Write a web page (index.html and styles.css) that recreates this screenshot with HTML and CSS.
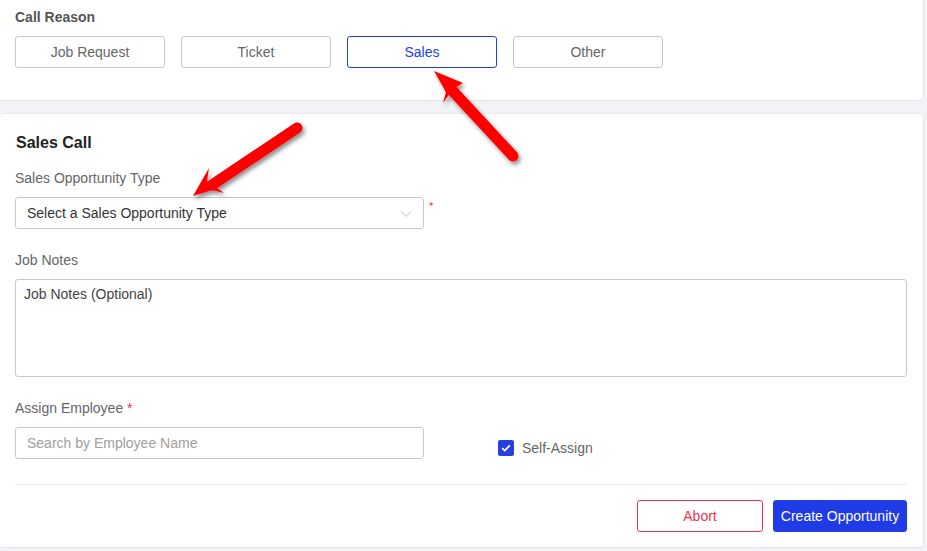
FILE: index.html
```html
<!DOCTYPE html>
<html>
<head>
<meta charset="utf-8">
<link rel="stylesheet" href="styles.css">
</head>
<body>
<div class="page">
  <section class="card card-top">
    <div class="section-label">Call Reason</div>
    <div class="reasons">
      <button class="reason">Job Request</button>
      <button class="reason">Ticket</button>
      <button class="reason active">Sales</button>
      <button class="reason">Other</button>
    </div>
  </section>
  <section class="card card-main">
    <h2 class="title">Sales Call</h2>
    <div class="field-label">Sales Opportunity Type</div>
    <div class="select-row">
      <div class="select">
        <span>Select a Sales Opportunity Type</span>
        <svg class="chev" width="12" height="8" viewBox="0 0 12 8"><path d="M1 1.5 L6 6.5 L11 1.5" fill="none" stroke="#bbb" stroke-width="1"/></svg>
      </div>
      <span class="req req-select">*</span>
    </div>
    <div class="field-label gap">Job Notes</div>
    <div class="textarea">Job Notes (Optional)</div>
    <div class="field-label gap">Assign Employee <span class="req">*</span></div>
    <div class="assign-row">
      <div class="input">Search by Employee Name</div>
      <label class="check">
        <span class="box"><svg width="10" height="8" viewBox="0 0 10 8"><path d="M1.2 4.2 L3.8 6.6 L8.8 1.4" fill="none" stroke="#fff" stroke-width="1.8"/></svg></span>
        <span>Self-Assign</span>
      </label>
    </div>
    <div class="divider"></div>
    <div class="actions">
      <button class="btn btn-abort">Abort</button>
      <button class="btn btn-primary">Create Opportunity</button>
    </div>
  </section>
  <svg class="arrows" width="927" height="551" viewBox="0 0 927 551">
    <defs>
      <filter id="sh" x="-20%" y="-20%" width="140%" height="140%">
        <feDropShadow dx="2" dy="3" stdDeviation="2.2" flood-color="#000" flood-opacity="0.45"/>
      </filter>
    </defs>
    <g filter="url(#sh)" fill="#ff0000" stroke="none">
      <line x1="513" y1="156" x2="450" y2="88" stroke="#ff0000" stroke-width="11" stroke-linecap="round"/>
      <polygon points="434,71 463,83 453,89 443,103 446,92"/>
      <line x1="297" y1="128" x2="212" y2="185" stroke="#ff0000" stroke-width="11" stroke-linecap="round"/>
      <polygon points="193,196 209,168 207,181 224,193 212,190"/>
    </g>
  </svg>
</div>
</body>
</html>
```
FILE: styles.css
```css
html, body {
  margin: 0;
  padding: 0;
}
body {
  background: #f2f3f6;
  font-family: "Liberation Sans", Arial, sans-serif;
  font-size: 14px;
  color: #555;
}
.page {
  position: relative;
  width: 927px;
  height: 551px;
  overflow: hidden;
}
.card {
  background: #fff;
  border-right: 1px solid #e4e5e9;
  border-bottom: 1px solid #e4e5e9;
  box-sizing: border-box;
  width: 924px;
}
.card-top {
  padding: 7px 15px 32px;
  border-radius: 0 0 4px 0;
}
.section-label {
  font-weight: bold;
  font-size: 14px;
  line-height: 20px;
  color: #555;
  margin-bottom: 9px;
}
.reasons {
  display: flex;
  gap: 16px;
}
.reason {
  width: 150px;
  height: 32px;
  border: 1px solid #c8c8c8;
  border-radius: 3px;
  background: #fff;
  font-family: "Liberation Sans", Arial, sans-serif;
  font-size: 14px;
  color: #666;
  padding: 0;
}
.reason.active {
  border-color: #1f3fe0;
  color: #1f3fe0;
}
.card-main {
  margin-top: 12px;
  padding: 18px 15px 15px;
  border-top: 1px solid #e8e9ec;
  border-radius: 4px;
  height: 435px;
}
.title {
  margin: 0 0 14px 1px;
  font-size: 16px;
  line-height: 22px;
  font-weight: bold;
  color: #222;
}
.field-label {
  font-size: 14px;
  line-height: 20px;
  color: #666;
  margin-bottom: 9px;
}
.field-label.gap {
  margin-top: 21px;
}
.req {
  color: #e8344e;
}
.select-row {
  display: flex;
  align-items: flex-start;
}
.select {
  width: 409px;
  height: 32px;
  box-sizing: border-box;
  border: 1px solid #c8c8c8;
  border-radius: 3px;
  display: flex;
  align-items: center;
  justify-content: space-between;
  padding: 0 11px;
  color: #333;
}
.chev {
  margin-top: 1px;
}
.req-select {
  font-size: 11px;
  margin-left: 5px;
  margin-top: 3px;
}
.textarea {
  width: 892px;
  height: 98px;
  box-sizing: border-box;
  border: 1px solid #c8c8c8;
  border-radius: 3px;
  padding: 6px 8px;
  color: #444;
  line-height: 16px;
}
.assign-row {
  display: flex;
  align-items: flex-start;
}
.input {
  width: 409px;
  height: 32px;
  box-sizing: border-box;
  border: 1px solid #c8c8c8;
  border-radius: 3px;
  padding: 0 11px;
  display: flex;
  align-items: center;
  color: #a0a0a0;
}
.check {
  display: flex;
  align-items: center;
  gap: 8px;
  margin-left: 74px;
  margin-top: 13px;
  color: #666;
  line-height: 16px;
}
.box {
  width: 16px;
  height: 16px;
  border-radius: 2px;
  background: #2540e0;
  display: flex;
  align-items: center;
  justify-content: center;
}
.divider {
  width: 892px;
  height: 1px;
  background: #e6e7ea;
  margin-top: 25px;
}
.actions {
  display: flex;
  justify-content: flex-end;
  gap: 10px;
  margin-top: 15px;
  width: 892px;
}
.btn {
  height: 32px;
  border-radius: 3px;
  font-family: "Liberation Sans", Arial, sans-serif;
  font-size: 14px;
  padding: 0;
}
.btn-abort {
  width: 126px;
  border: 1px solid #e8344e;
  background: #fff;
  color: #e8344e;
}
.btn-primary {
  width: 134px;
  border: 1px solid #1f3be6;
  background: #1f3be6;
  color: #fff;
}
.arrows {
  position: absolute;
  left: 0;
  top: 0;
  pointer-events: none;
}
```
